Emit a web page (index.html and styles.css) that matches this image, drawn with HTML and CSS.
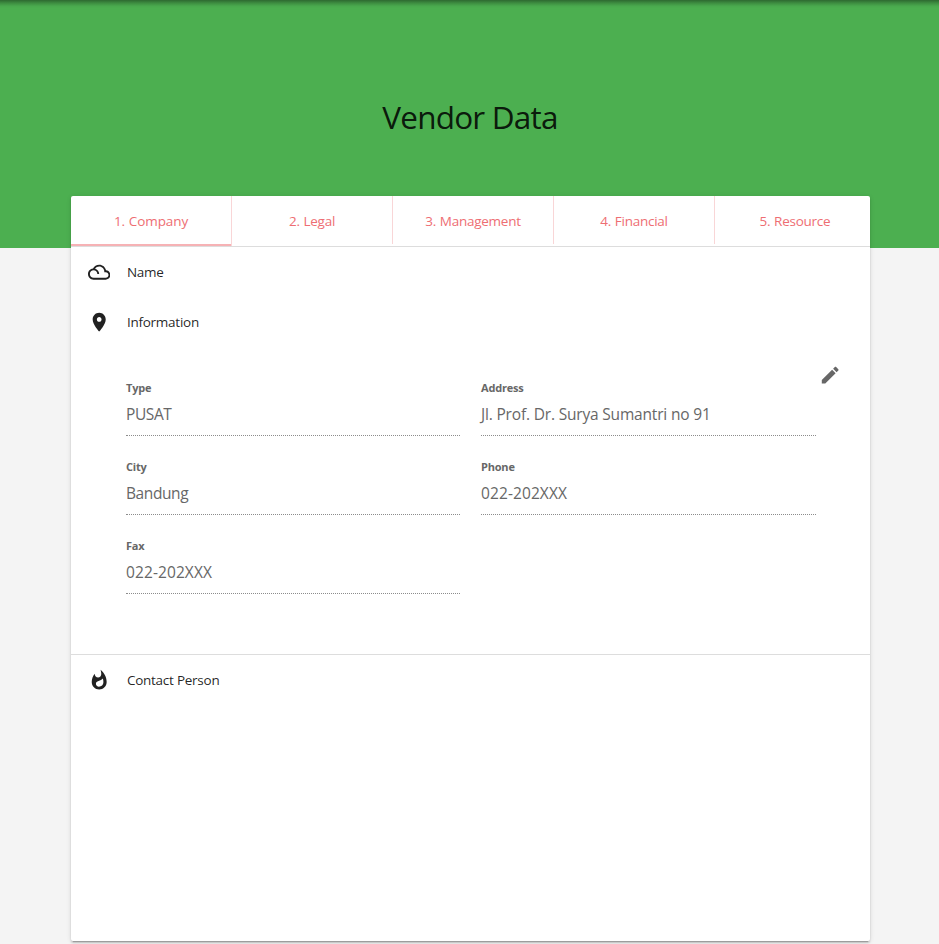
FILE: index.html
```html
<!DOCTYPE html>
<html lang="en">
<head>
<meta charset="utf-8">
<title>Vendor Data</title>
<link rel="stylesheet" href="styles.css">
</head>
<body>
<header class="banner"><h1>Vendor Data</h1></header>
<main class="card">
  <nav class="tabs">
    <a class="tab active">1. Company</a>
    <a class="tab">2. Legal</a>
    <a class="tab">3. Management</a>
    <a class="tab">4. Financial</a>
    <a class="tab">5. Resource</a>
  </nav>
  <section>
    <h2 class="row">
      <svg class="icon" viewBox="0 0 24 24"><path d="M19.35 10.04C18.67 6.59 15.64 4 12 4 9.11 4 6.61 5.64 5.36 8.04 2.35 8.36 0 10.9 0 14c0 3.31 2.69 6 6 6h13c2.76 0 5-2.24 5-5 0-2.64-2.05-4.78-4.65-4.96zM19 18H6c-2.21 0-4-1.79-4-4s1.79-4 4-4 4 1.79 4 4h2c0-2.76-1.86-5.08-4.4-5.78C8.61 6.88 10.2 6 12 6c3.03 0 5.5 2.47 5.5 5.5v.5H19c1.66 0 3 1.34 3 3s-1.34 3-3 3z"/></svg>
      <span class="title">Name</span>
    </h2>
  </section>
  <section class="information">
    <h2 class="row">
      <svg class="icon" viewBox="0 0 24 24"><path d="M12 2C8.13 2 5 5.13 5 9c0 5.25 7 13 7 13s7-7.75 7-13c0-3.87-3.13-7-7-7zm0 9.500c-1.380 0-2.500-1.120-2.500-2.500s1.120-2.500 2.500-2.500 2.500 1.120 2.500 2.500-1.120 2.500-2.500 2.500z"/></svg>
      <span class="title">Information</span>
    </h2>
    <div class="details">
      <dl class="fields">
        <div class="field"><dt>Type</dt><dd class="short">PUSAT</dd></div>
        <div class="field"><dt>Address</dt><dd>Jl. Prof. Dr. Surya Sumantri no 91</dd></div>
        <div class="field"><dt>City</dt><dd class="short">Bandung</dd></div>
        <div class="field"><dt>Phone</dt><dd class="number">022-202XXX</dd></div>
        <div class="field"><dt>Fax</dt><dd class="number">022-202XXX</dd></div>
      </dl>
      <svg class="icon edit" viewBox="0 0 24 24"><path d="M3 17.250V21h3.750L17.810 9.940l-3.750-3.750L3 17.250zM20.710 7.040c.39-.39.39-1.020 0-1.410l-2.340-2.340c-.39-.39-1.020-.39-1.410 0l-1.830 1.830 3.750 3.750 1.830-1.830z"/></svg>
    </div>
  </section>
  <section class="contact">
    <h2 class="row">
      <svg class="icon" viewBox="0 0 24 24"><path d="M13.500.67s.74 2.650.74 4.800c0 2.060-1.350 3.730-3.410 3.730-2.070 0-3.630-1.670-3.630-3.730l.03-.36C5.210 7.510 4 10.620 4 14c0 4.420 3.580 8 8 8s8-3.580 8-8C20 8.610 17.410 3.800 13.500.67zM11.710 19c-1.780 0-3.220-1.400-3.220-3.140 0-1.620 1.050-2.760 2.810-3.120 1.770-.36 3.600-1.210 4.620-2.580.39 1.290.59 2.650.59 4.040 0 2.650-2.150 4.800-4.800 4.800z"/></svg>
      <span class="title">Contact Person</span>
    </h2>
  </section>
</main>
</body>
</html>
```
FILE: styles.css
```css
* { box-sizing: border-box; }
body {
  margin: 0;
  height: 944px;
  overflow: hidden;
  background: #f4f4f4;
  color: rgba(0, 0, 0, .87);
  font-family: "Open Sans", "Noto Sans", sans-serif;
  font-size: 14px;
}
h1, h2, dl, dt, dd { margin: 0; font-weight: 400; }
.banner {
  height: 248px;
  padding: 92px 0 0 1px;
  background: linear-gradient(rgba(0, 0, 0, .4), rgba(0, 0, 0, .2) 3px, rgba(0, 0, 0, .04) 6px, transparent 8px) #4caf50;
  text-align: center;
}
h1 { font-size: 31.500px; line-height: 50px; letter-spacing: -.8px; }
.card {
  width: 799px;
  height: 745px;
  margin: -52px 0 0 71px;
  position: relative;
  background: #fff;
  border-radius: 2px;
  box-shadow: 0 2px 2px rgba(0, 0, 0, .14), 0 1px 5px rgba(0, 0, 0, .12), 0 3px 1px -2px rgba(0, 0, 0, .2);
}
.tabs {
  display: flex;
  height: 51px;
  overflow: hidden;
  border-bottom: 1px solid #ddd;
}
.tab {
  flex: 0 0 161px;
  height: 48px;
  border-right: 1px solid #f9d6d7;
  color: #ee6e73;
  text-align: center;
  font-size: 13.500px;
  line-height: 50px;
  letter-spacing: -.25px;
  word-spacing: .5px;
}
.tab.active { height: 50px; box-shadow: inset 0 -2px #f6b2b5; letter-spacing: -.1px; }
.row {
  display: flex;
  align-items: center;
  gap: 16.500px;
  height: 50px;
  padding-left: 17px;
}
.title { padding-bottom: 1px; font-size: 13.500px; letter-spacing: -.25px; }
.icon { flex: none; width: 22.400px; height: 22.400px; fill: #212121; }
.information { height: 357px; }
.details { display: flex; padding: 33px 28px 0 55px; }
.fields {
  display: grid;
  grid-template-columns: 334px 335px;
  column-gap: 21px;
  color: #676767;
}
.field { height: 79px; }
dt { font-size: 11px; line-height: 16px; font-weight: 700; letter-spacing: -.2px; }
dd {
  height: 40px;
  border-bottom: 1px dotted #8c8c8c;
  font-size: 15.500px;
  line-height: 37px;
  letter-spacing: -.18px;
}
.short { letter-spacing: -.4px; }
.number { letter-spacing: .1px; }
.edit { margin: -16px 0 0 2.500px; fill: #676767; }
.contact { border-top: 1px solid #ddd; }
```
